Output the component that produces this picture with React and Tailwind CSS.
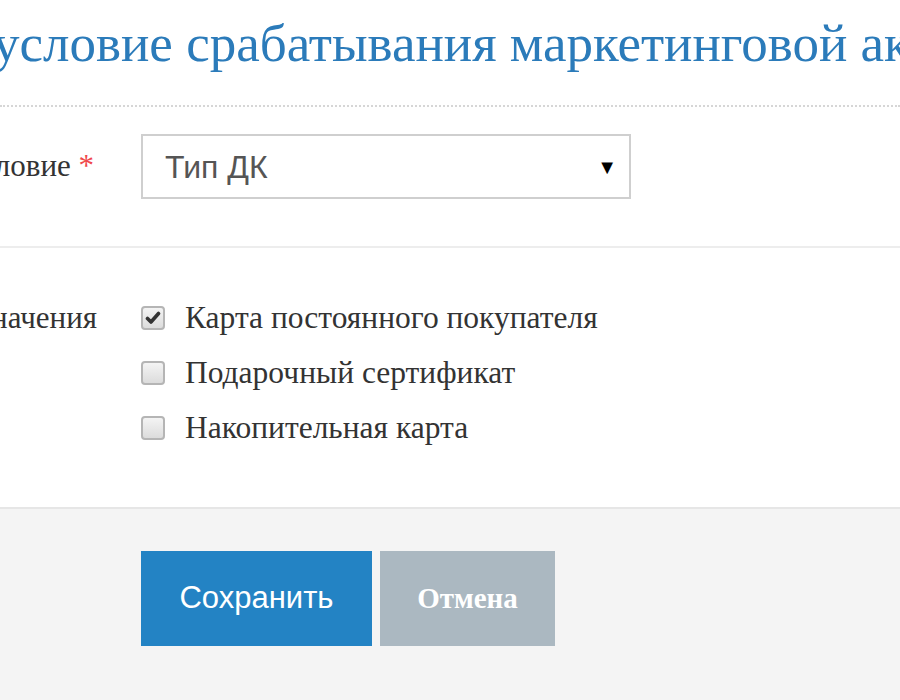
import React from "react";

function Checkbox({ checked }) {
  return (
    <span className="flex h-[24px] w-[24px] shrink-0 items-center justify-center rounded-[4px] border-2 border-[#b5b5b5] bg-gradient-to-b from-[#f4f4f4] to-[#dcdcdc]">
      {checked && (
        <svg width="16" height="14" viewBox="0 0 16 14">
          <path d="M2.5 7.5 L6 11 L13.5 2.5" fill="none" stroke="#333" strokeWidth="3.6" strokeLinecap="round" strokeLinejoin="round" />
        </svg>
      )}
    </span>
  );
}

export default function App() {
  const serif = { fontFamily: '"Liberation Serif", "Times New Roman", serif' };
  const sans = { fontFamily: '"Liberation Sans", Arial, sans-serif' };
  const options = [
    { label: "Карта постоянного покупателя", checked: true },
    { label: "Подарочный сертификат", checked: false },
    { label: "Накопительная карта", checked: false },
  ];
  return (
    <div className="relative h-[700px] w-[900px] overflow-hidden bg-white" style={serif}>
      <div className="h-[107px] border-b-2 border-dotted border-[#d6d6d6] pt-[13px]">
        <div className="-ml-[7px] whitespace-nowrap text-[53px] leading-[60px] text-[#2b7bba]">
          условие срабатывания маркетинговой акции
        </div>
      </div>

      <div className="flex h-[141px] border-b-2 border-[#ededed] pt-[27px]">
        <div className="flex w-[141px] shrink-0 justify-end pr-[47px] pt-[14px]">
          <span className="whitespace-nowrap text-[31px] leading-[36px] text-[#333]">
            Условие <span className="text-[#f0484c]">*</span>
          </span>
        </div>
        <div className="flex h-[65px] w-[490px] items-center justify-between border-2 border-[#cfcfcf] pl-[22px] pr-[12px]">
          <span className="text-[32px] text-[#555]" style={sans}>Тип ДК</span>
          <span className="text-[20px] text-black" style={sans}>▼</span>
        </div>
      </div>

      <div className="flex h-[259px] pt-[52px]">
        <div className="flex w-[141px] shrink-0 justify-end pr-[44px]">
          <span className="whitespace-nowrap text-[31px] leading-[36px] text-[#333]">Значения</span>
        </div>
        <div className="flex flex-col gap-[19px]">
          {options.map((o) => (
            <div key={o.label} className="flex h-[36px] items-center gap-[20px]">
              <Checkbox checked={o.checked} />
              <span className="whitespace-nowrap text-[31.5px] leading-[36px] text-[#333]">{o.label}</span>
            </div>
          ))}
        </div>
      </div>

      <div className="h-[200px] border-t-2 border-[#e6e6e6] bg-[#f4f4f4] pl-[141px] pt-[42px]">
        <div className="flex gap-[8px]">
          <button className="flex h-[95px] w-[231px] items-center justify-center bg-[#2383c4] text-[31px] text-white" style={sans}>
            Сохранить
          </button>
          <button className="flex h-[95px] w-[175px] items-center justify-center bg-[#abb8c1] text-[29px] font-bold text-white" style={serif}>
            Отмена
          </button>
        </div>
      </div>
    </div>
  );
}
